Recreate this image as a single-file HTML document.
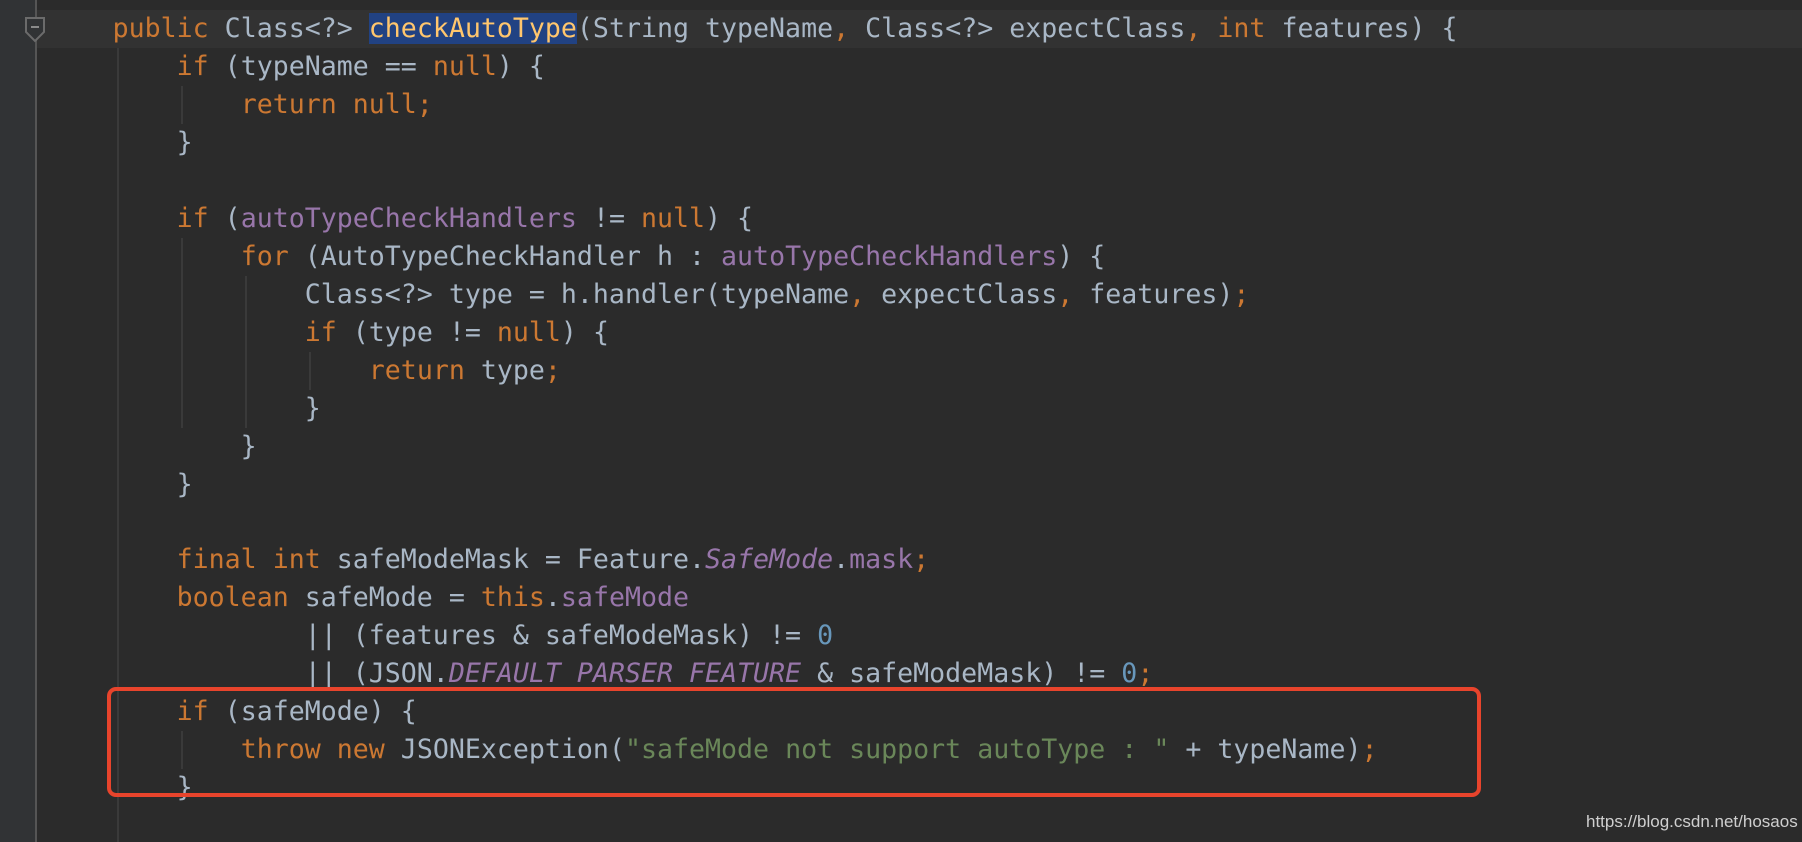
<!DOCTYPE html>
<html><head><meta charset="utf-8"><style>
html,body{margin:0;padding:0}
body{width:1802px;height:842px;background:#2b2b2b;position:relative;overflow:hidden;font-family:"DejaVu Sans Mono","Liberation Mono",monospace;}
.gut{position:absolute;left:0;top:0;width:35px;height:842px;background:#313335}
.gl{position:absolute;left:35px;top:0;width:2px;height:842px;background:#555}
.cur{position:absolute;left:37px;top:10px;width:1765px;height:38px;background:#323232}
.g{position:absolute;width:2px;background:#3a3a3a}
.l{position:absolute;left:112.6px;height:38px;line-height:38px;font-size:26.6px;color:#a9b7c6;white-space:pre}
.k{color:#cc7832}.p{color:#9876aa}.n{color:#6897bb}.s{color:#6a8759}.i{font-style:italic}
.m{color:#ffc66d;background:#214283}
.box{position:absolute;left:107px;top:687px;width:1366px;height:102px;border:4px solid #e8442c;border-radius:9px}
.wm{position:absolute;left:1586px;top:812px;font-family:"Liberation Sans",sans-serif;font-size:17px;color:#cfcfcf}
</style></head><body>
<div class="gut"></div><div class="gl"></div>
<div class="cur"></div>
<svg style="position:absolute;left:24px;top:17px" width="22" height="26"><path d="M2 1 H20 V15 L11 24 L2 15 Z" fill="#313335" stroke="#6b6b6b" stroke-width="2"/><path d="M7 10 H15" stroke="#8a8a8a" stroke-width="2"/></svg>
<div class="g" style="left:117px;top:48px;height:794px"></div>
<div class="g" style="left:181px;top:86px;height:38px"></div>
<div class="g" style="left:181px;top:238px;height:190px"></div>
<div class="g" style="left:245px;top:276px;height:152px"></div>
<div class="g" style="left:309px;top:352px;height:38px"></div>
<div class="g" style="left:181px;top:731px;height:38px"></div>

<div class="l" style="top:10px"><span class="k">public</span> Class&lt;?&gt; <span class="m">checkAutoType</span>(String typeName<span class="k">,</span> Class&lt;?&gt; expectClass<span class="k">,</span> <span class="k">int</span> features) {</div>
<div class="l" style="top:48px">    <span class="k">if</span> (typeName == <span class="k">null</span>) {</div>
<div class="l" style="top:86px">        <span class="k">return null;</span></div>
<div class="l" style="top:124px">    }</div>
<div class="l" style="top:200px">    <span class="k">if</span> (<span class="p">autoTypeCheckHandlers</span> != <span class="k">null</span>) {</div>
<div class="l" style="top:238px">        <span class="k">for</span> (AutoTypeCheckHandler h : <span class="p">autoTypeCheckHandlers</span>) {</div>
<div class="l" style="top:276px">            Class&lt;?&gt; type = h.handler(typeName<span class="k">,</span> expectClass<span class="k">,</span> features)<span class="k">;</span></div>
<div class="l" style="top:314px">            <span class="k">if</span> (type != <span class="k">null</span>) {</div>
<div class="l" style="top:352px">                <span class="k">return</span> type<span class="k">;</span></div>
<div class="l" style="top:390px">            }</div>
<div class="l" style="top:428px">        }</div>
<div class="l" style="top:466px">    }</div>
<div class="l" style="top:541px">    <span class="k">final int</span> safeModeMask = Feature.<span class="p i">SafeMode</span>.<span class="p">mask</span><span class="k">;</span></div>
<div class="l" style="top:579px">    <span class="k">boolean</span> safeMode = <span class="k">this</span>.<span class="p">safeMode</span></div>
<div class="l" style="top:617px">            || (features &amp; safeModeMask) != <span class="n">0</span></div>
<div class="l" style="top:655px">            || (JSON.<span class="p i">DEFAULT_PARSER_FEATURE</span> &amp; safeModeMask) != <span class="n">0</span><span class="k">;</span></div>
<div class="l" style="top:693px">    <span class="k">if</span> (safeMode) {</div>
<div class="l" style="top:731px">        <span class="k">throw new</span> JSONException(<span class="s">"safeMode not support autoType : "</span> + typeName)<span class="k">;</span></div>
<div class="l" style="top:769px">    }</div>
<div class="box"></div>
<div class="wm">https://blog.csdn.net/hosaos</div>
</body></html>
